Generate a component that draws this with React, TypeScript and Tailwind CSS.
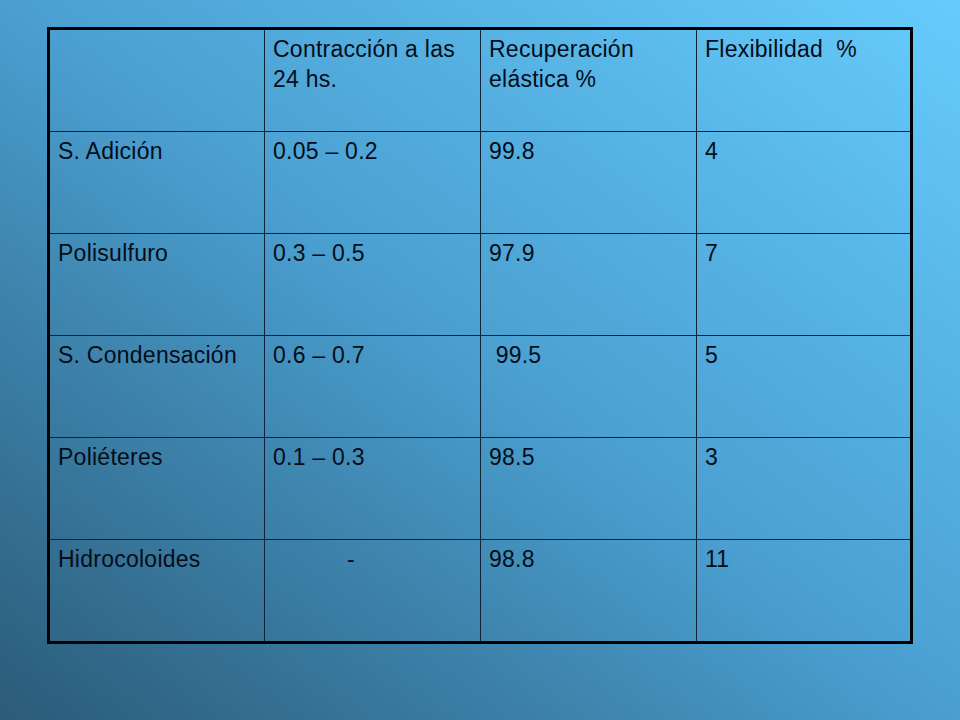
const header = ['', 'Contracción a las\n24 hs.', 'Recuperación\nelástica %', 'Flexibilidad  %']

const rows = [
  ['S. Adición', '0.05 – 0.2', '99.8', '4'],
  ['Polisulfuro', '0.3 – 0.5', '97.9', '7'],
  ['S. Condensación', '0.6 – 0.7', '\u00a099.5', '5'],
  ['Poliéteres', '0.1 – 0.3', '98.5', '3'],
  ['Hidrocoloides', '-', '98.8', '11'],
]

const colClass = [
  'w-[214px]',
  'w-[216px] border-l border-[#0e2436]',
  'w-[216px] border-l border-[#0e2436]',
  'w-[214px] border-l border-[#0e2436]',
]

function Row({ cells, first }: { cells: string[]; first?: boolean }) {
  return (
    <div
      className={
        first ? 'flex h-[101px]' : 'flex h-[102px] border-t border-[#0e2436]'
      }
    >
      {cells.map((c, i) => (
        <div
          key={i}
          className={`${colClass[i]} h-full pt-[4px] ${
            c === '-' ? 'pl-[82px]' : 'pl-[8px]'
          } whitespace-pre-wrap`}
        >
          {c}
        </div>
      ))}
    </div>
  )
}

export default function App() {
  return (
    <div
      className="w-[960px] h-[720px] overflow-hidden bg-linear-to-tr from-[#2b5b78] via-[#4a9fd0] to-[#66ccfd] pt-[27px] pl-[47px]"
      style={{ fontFamily: '"Liberation Sans", Arial, sans-serif' }}
    >
      <div className="w-[866px] border-[3px] border-black text-[23px] leading-[30px] tracking-[0.25px] text-[#050d18]">
        <Row cells={header} first />
        {rows.map((r) => (
          <Row key={r[0]} cells={r} />
        ))}
      </div>
    </div>
  )
}
